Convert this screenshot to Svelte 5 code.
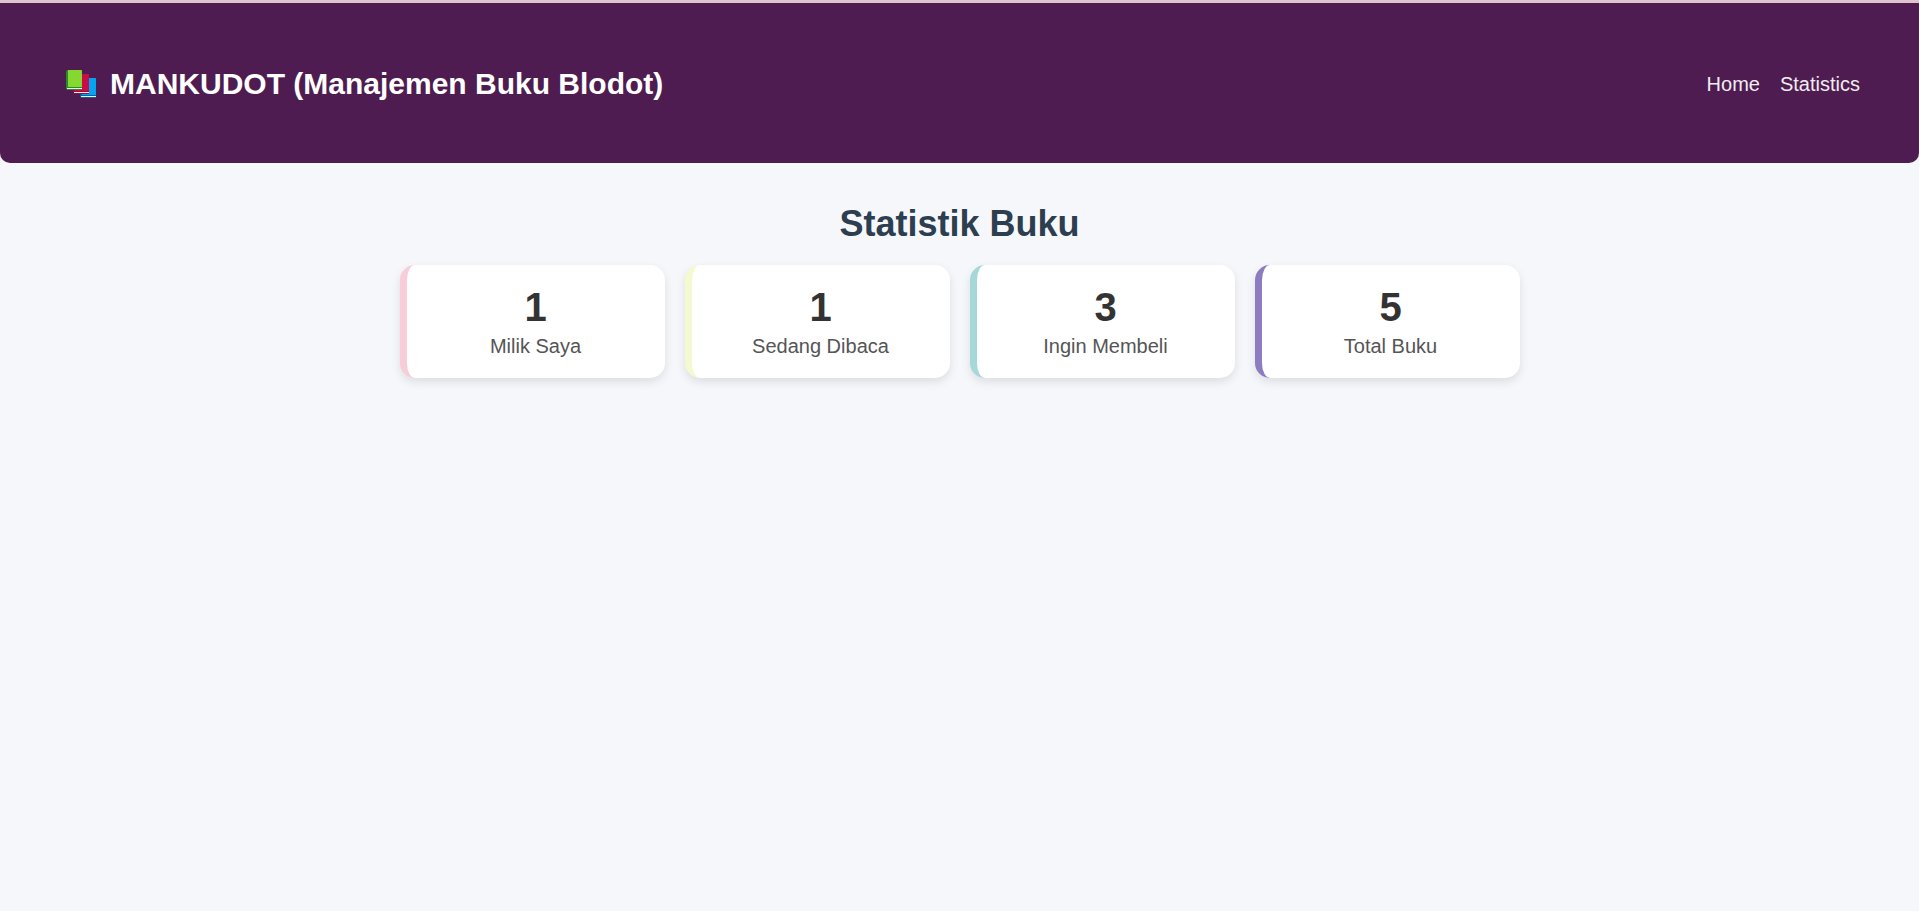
<script>
  const stats = [
    { value: 1, label: 'Milik Saya', tone: 'pink' },
    { value: 1, label: 'Sedang Dibaca', tone: 'yellow' },
    { value: 3, label: 'Ingin Membeli', tone: 'teal' },
    { value: 5, label: 'Total Buku', tone: 'purple' }
  ];

  const books = [
    { x: 14, y: 8, cover: '#00a4ef', edge: '#0a5f9e' },
    { x: 7, y: 4, cover: '#ca0b4a', edge: '#a00a3c' },
    { x: 0, y: 0, cover: '#86d72f', edge: '#278b2d' }
  ];
</script>

<header>
  <h1>
    <svg viewBox="0 0 30 28" width="30" height="28" aria-hidden="true">
      {#each books as book}
        <g transform="translate({book.x} {book.y})">
          <path d="M2 0h14v20H2q-2 0-2-2V2q0-2 2-2z" fill={book.edge} />
          <path d="M2 0h13q1 0 1 1v16H2z" fill={book.cover} />
          <path d="M1 18h15v1H1z" fill="#f1f3f0" />
        </g>
      {/each}
    </svg>
    <span>MANKUDOT (Manajemen Buku Blodot)</span>
  </h1>
  <nav>
    <a href="#home">Home</a>
    <a href="#statistics">Statistics</a>
  </nav>
</header>

<main>
  <h2>Statistik Buku</h2>
  <section class="stats">
    {#each stats as stat}
      <article class="card {stat.tone}">
        <strong>{stat.value}</strong>
        <span>{stat.label}</span>
      </article>
    {/each}
  </section>
</main>

<style>
  :global(body) {
    margin: 0;
    background: #f5f7fb;
    font-family: "Liberation Sans", Arial, sans-serif;
  }
  header {
    display: flex;
    align-items: center;
    justify-content: space-between;
    padding: 64px 59px 59px 60px;
    background: linear-gradient(#dfc4cf, #dfc4cf) top / 100% 3px no-repeat, #4e1c50;
    border-radius: 0 0 10px 10px;
  }
  h1 {
    display: flex;
    align-items: center;
    gap: 14px;
    margin: 0;
    padding-left: 6px;
    color: #fff;
    font-size: 30px;
    line-height: 40px;
  }
  nav {
    display: flex;
    gap: 20px;
    font-size: 20px;
    line-height: 24px;
  }
  nav a {
    color: #f0ecf0;
    text-decoration: none;
  }
  main {
    max-width: 1120px;
    margin: 0 auto;
    padding: 40px;
  }
  h2 {
    margin: 0 0 20px;
    color: #2c3e50;
    font-size: 36px;
    line-height: 42px;
    text-align: center;
  }
  .stats {
    display: grid;
    grid-template-columns: repeat(4, 1fr);
    gap: 20px;
  }
  .card {
    display: flex;
    flex-direction: column;
    align-items: center;
    gap: 5px;
    padding: 20px;
    background: #fff;
    border-left: 7px solid;
    border-radius: 15px;
    box-shadow: 0 4px 10px rgba(0, 0, 0, 0.1);
  }
  .card strong {
    color: #333;
    font-size: 40px;
    line-height: 44px;
  }
  .card span {
    color: #555;
    font-size: 20px;
    line-height: 24px;
  }
  .pink { border-color: #f8cdd8; }
  .yellow { border-color: #f4f9d0; }
  .teal { border-color: #a5d8d6; }
  .purple { border-color: #8d7cc0; }
</style>
